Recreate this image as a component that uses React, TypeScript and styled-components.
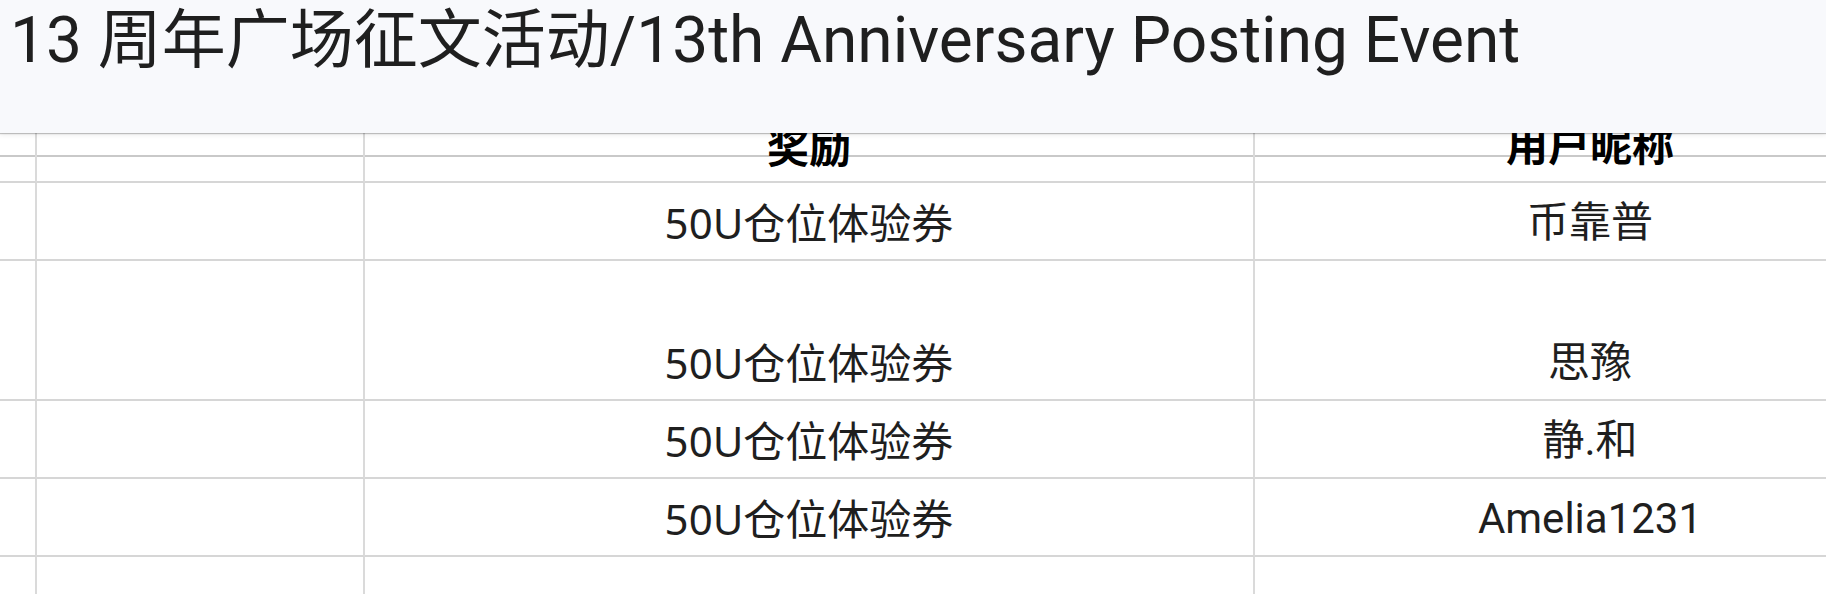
import React from 'react';
import styled, { createGlobalStyle } from 'styled-components';

const GlobalStyle = createGlobalStyle`
  html, body {
    margin: 0;
    padding: 0;
    background: #fff;
    overflow: hidden;
  }
`

const Page = styled.div`
  width: 1826px;
  height: 594px;
  overflow: hidden;
  display: flex;
  flex-direction: column;
  font-family: Roboto, "Noto Sans CJK SC", sans-serif;
  color: #1f1f1f;
`

const TitleBar = styled.header`
  position: relative;
  z-index: 2;
  flex: 0 0 auto;
  height: 133px;
  box-sizing: border-box;
  padding: 6px 0 0 10px;
  background: #f8f9fc;
  box-shadow: 0 1px 1px rgba(0, 0, 0, 0.22), 0 2px 5px rgba(0, 0, 0, 0.08);
`

const Title = styled.h1`
  margin: 0;
  font-size: 64px;
  line-height: 70px;
  font-weight: 400;
  white-space: nowrap;
  color: #1f1f1f;
`

const Sheet = styled.div`
  display: grid;
  grid-template-columns: 37px 328px 890px 672px;
  margin-top: -21px;
  width: 1927px;
`

const Cell = styled.div<{ $height: number; $bold?: boolean; $freeze?: boolean; $wide?: boolean }>`
  box-sizing: border-box;
  height: ${p => p.$height}px;
  border-right: 2px solid #dadada;
  border-bottom: 2px solid #d6d6d6;
  display: flex;
  align-items: flex-end;
  justify-content: center;
  padding-bottom: ${p => (p.$bold ? 9 : 11)}px;
  font-family: ${p => (p.$wide ? '"Noto Sans", "Noto Sans CJK SC", sans-serif' : 'inherit')};
  font-size: 42px;
  line-height: 1.2;
  font-weight: ${p => (p.$bold ? 700 : 400)};
  color: ${p => (p.$bold ? '#000' : '#1f1f1f')};
  white-space: nowrap;
  background: ${p =>
    p.$freeze
      ? 'linear-gradient(to bottom, transparent 43px, #c9c9c9 43px, #c9c9c9 45px, transparent 45px)'
      : '#fff'};
`

const CellText = styled.span`
  position: relative;
  z-index: 1;
`

type Row = { height: number; reward?: string; name?: string; header?: boolean }

const rows: Row[] = [
  { height: 71, reward: '奖励', name: '用户昵称', header: true },
  { height: 78, reward: '50U仓位体验券', name: '币靠普' },
  { height: 140, reward: '50U仓位体验券', name: '思豫' },
  { height: 78, reward: '50U仓位体验券', name: '静.和' },
  { height: 78, reward: '50U仓位体验券', name: 'Amelia1231' },
  { height: 78 },
]

const App: React.FC = () => {
  return (
    <Page>
      <GlobalStyle />
      <TitleBar>
        <Title>13 周年广场征文活动/13th Anniversary Posting Event</Title>
      </TitleBar>
      <Sheet>
        {rows.map((row, i) => (
          <React.Fragment key={i}>
            <Cell $height={row.height} $freeze={row.header} />
            <Cell $height={row.height} $freeze={row.header} />
            <Cell $height={row.height} $freeze={row.header} $bold={row.header} $wide>
              {row.reward && <CellText>{row.reward}</CellText>}
            </Cell>
            <Cell $height={row.height} $freeze={row.header} $bold={row.header}>
              {row.name && <CellText>{row.name}</CellText>}
            </Cell>
          </React.Fragment>
        ))}
      </Sheet>
    </Page>
  );
}

export default App;
